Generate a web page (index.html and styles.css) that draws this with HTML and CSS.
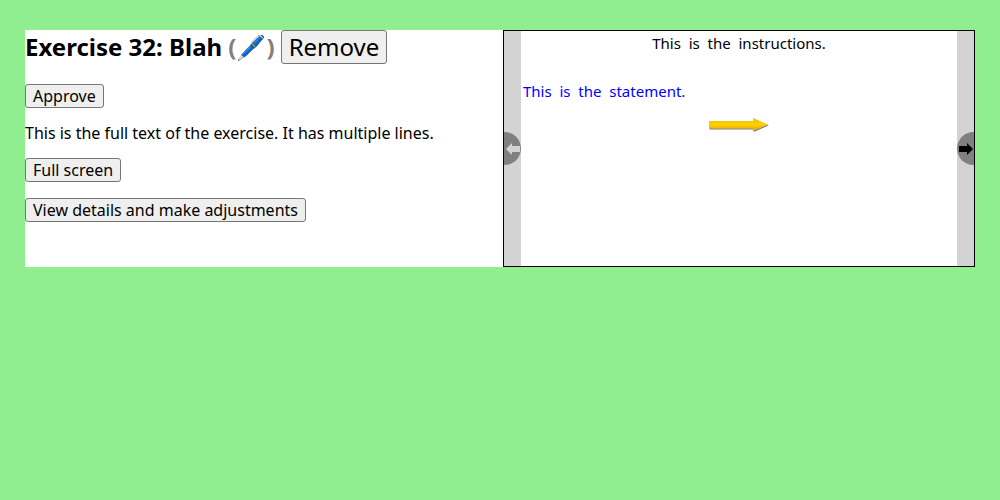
FILE: index.html
```html
<!DOCTYPE html>
<html lang="en">
<head>
<meta charset="utf-8">
<title>Exercise 32</title>
<link rel="stylesheet" href="styles.css">
</head>
<body>
<main class="exercise">
  <section class="details">
    <h2 class="title">
      <span>Exercise 32: Blah <span class="edit">(🖊️)</span></span>
      <button type="button" class="button remove">Remove</button>
    </h2>
    <button type="button" class="button">Approve</button>
    <p class="text">This is the full text of the exercise. It has multiple lines.</p>
    <button type="button" class="button">Full screen</button>
    <button type="button" class="button">View details and make adjustments</button>
  </section>
  <section class="preview">
    <div class="rail">
      <button type="button" class="nav previous" aria-label="Previous" disabled><svg class="nav-icon" viewBox="0 0 14 12"><path d="M0 6 6 0V3H14V9H6V12Z" fill="#d3d3d3"/></svg></button>
    </div>
    <div class="page">
      <p class="instructions">This  is  the  instructions.</p>
      <p class="statement">This  is  the  statement.</p>
      <svg class="arrow" viewBox="0 0 62 18" aria-hidden="true">
        <defs>
          <linearGradient id="gold" x1="0" y1="0" x2="0" y2="1"><stop offset="0" stop-color="#edbd12"/><stop offset=".5" stop-color="#ffd000"/><stop offset="1" stop-color="#dda600"/></linearGradient>
          <filter id="shade" x="-10%" y="-20%" width="120%" height="150%"><feDropShadow dx=".6" dy="1" stdDeviation=".7" flood-color="#555" flood-opacity=".8"/></filter>
        </defs>
        <path d="M1 5H45V2L60 8.500 45 15V12.500H1Z" fill="url(#gold)" filter="url(#shade)"/>
      </svg>
    </div>
    <div class="rail">
      <button type="button" class="nav next" aria-label="Next"><svg class="nav-icon" viewBox="0 0 14 12"><path d="M14 6 8 0V3H0V9H8V12Z" fill="#000"/></svg></button>
    </div>
  </section>
</main>
</body>
</html>
```
FILE: styles.css
```css
* {
  box-sizing: border-box;
}

body {
  margin: 30px 25px;
  background: lightgreen;
  color: #000;
  font: 16px/18px "Noto Sans", sans-serif;
}

.exercise {
  display: grid;
  grid-template-columns: 478fr 472fr;
  background: #fff;
}

.details {
  display: flex;
  flex-direction: column;
  align-items: flex-start;
  gap: 16px;
}

.title {
  display: flex;
  align-items: center;
  gap: 6px;
  margin: 0 0 4px;
  font-size: 24px;
  line-height: 34px;
}

.edit {
  color: gray;
}

.button {
  padding: 0 7px;
  border: 1px solid #767676;
  border-radius: 3px;
  background: #efefef;
  color: #000;
  font: 16px/22px "Noto Sans", sans-serif;
}

.remove {
  font-size: 24px;
  line-height: 32px;
}

.text {
  margin: 0;
}

.preview {
  display: flex;
  width: 100%;
  min-width: 0;
  aspect-ratio: 472 / 237;
  border: 1px solid #000;
}

.rail {
  display: flex;
  flex: 0 0 17px;
  align-items: center;
  background: lightgray;
}

.nav {
  display: flex;
  align-items: center;
  justify-content: center;
  width: 17px;
  height: 33px;
  padding: 0;
  border: 0;
  background: gray;
}

.previous {
  border-radius: 0 17px 17px 0;
}

.next {
  border-radius: 17px 0 0 17px;
}

.nav-icon {
  width: 14px;
  height: 12px;
}

.page {
  display: flex;
  flex: 1;
  flex-direction: column;
  padding: 1px 2px;
  font-size: 15px;
  line-height: 22px;
  white-space: pre-wrap;
}

.instructions {
  margin: 0;
  text-align: center;
}

.statement {
  margin: 26px 0 0;
  color: #00f;
}

.arrow {
  align-self: center;
  width: 62px;
  height: 18px;
  margin-top: 14px;
}
```
